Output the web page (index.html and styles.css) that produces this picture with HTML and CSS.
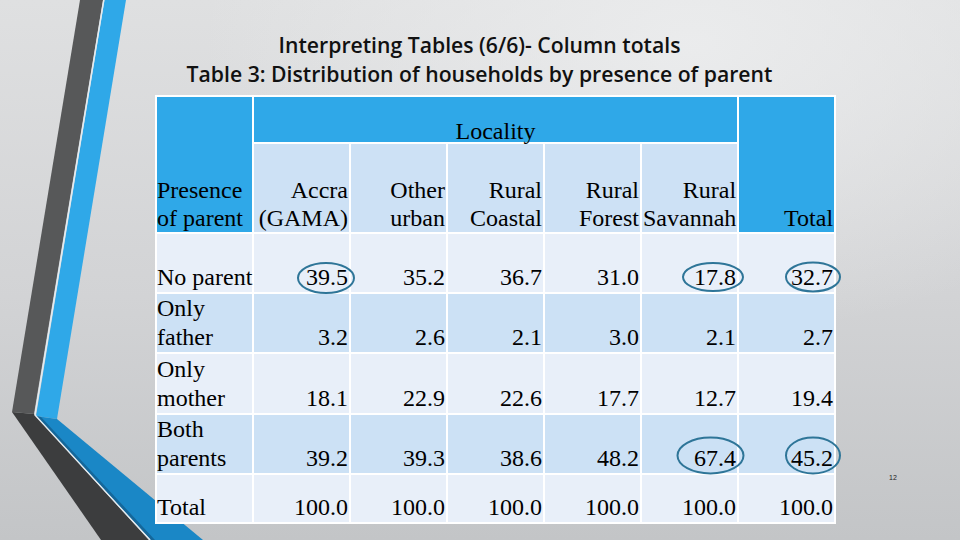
FILE: index.html
```html
<!DOCTYPE html>
<html lang="en">
<head>
<meta charset="utf-8">
<title>Interpreting Tables (6/6)- Column totals</title>
<link rel="stylesheet" href="styles.css">
</head>
<body>
<div class="slide">
  <svg class="deco" width="240" height="540" viewBox="0 0 240 540" aria-hidden="true">
    <polygon points="80,0 103,0 34,414 12,412" fill="#575859"/>
    <polygon points="12,412 34,414 149,540 101,540" fill="#3c3d3e"/>
    <polygon points="104.5,0 126,0 57,419 36,416" fill="#2fa8e8"/>
    <polygon points="36,416 57,419 203,540 151,540" fill="#1a87c6"/>
    <polygon points="36,416 41,417 155,540 151,540" fill="#14679a"/>
    <polyline points="103.8,0 35,415 150,540" fill="none" stroke="#e4ecf1" stroke-width="1.4"/>
  </svg>

  <header class="title">
    <div>Interpreting Tables (6/6)- Column totals</div>
    <div>Table 3: Distribution of households by presence of parent</div>
  </header>

  <div class="content">
    <table class="data">
      <colgroup>
        <col class="c"><col class="c"><col class="c"><col class="c"><col class="c"><col class="c"><col class="c">
      </colgroup>
      <tr class="h1">
        <td class="hd left" rowspan="2">Presence<br>of parent</td>
        <td class="hd center" colspan="5">Locality</td>
        <td class="hd num" rowspan="2">Total</td>
      </tr>
      <tr class="h2">
        <td class="sub num">Accra<br>(GAMA)</td>
        <td class="sub num">Other<br>urban</td>
        <td class="sub num">Rural<br>Coastal</td>
        <td class="sub num">Rural<br>Forest</td>
        <td class="sub num">Rural<br>Savannah</td>
      </tr>
      <tr class="r1 light">
        <td class="left">No parent</td>
        <td class="num">39.5</td><td class="num">35.2</td><td class="num">36.7</td><td class="num">31.0</td><td class="num">17.8</td><td class="num">32.7</td>
      </tr>
      <tr class="r2 mid">
        <td class="left">Only<br>father</td>
        <td class="num">3.2</td><td class="num">2.6</td><td class="num">2.1</td><td class="num">3.0</td><td class="num">2.1</td><td class="num">2.7</td>
      </tr>
      <tr class="r3 light">
        <td class="left">Only<br>mother</td>
        <td class="num">18.1</td><td class="num">22.9</td><td class="num">22.6</td><td class="num">17.7</td><td class="num">12.7</td><td class="num">19.4</td>
      </tr>
      <tr class="r4 mid">
        <td class="left">Both<br>parents</td>
        <td class="num">39.2</td><td class="num">39.3</td><td class="num">38.6</td><td class="num">48.2</td><td class="num">67.4</td><td class="num">45.2</td>
      </tr>
      <tr class="r5 light">
        <td class="left">Total</td>
        <td class="num">100.0</td><td class="num">100.0</td><td class="num">100.0</td><td class="num">100.0</td><td class="num">100.0</td><td class="num">100.0</td>
      </tr>
    </table>
    <div class="page-num">12</div>
  </div>

  <svg class="marks" width="960" height="540" viewBox="0 0 960 540" aria-hidden="true">
    <g fill="none" stroke="#2e7598" stroke-width="2">
      <ellipse cx="326" cy="278" rx="28" ry="15"/>
      <ellipse cx="713" cy="277" rx="30" ry="14"/>
      <ellipse cx="813" cy="277" rx="27" ry="14.5"/>
      <ellipse cx="710.5" cy="455.5" rx="33" ry="18"/>
      <ellipse cx="813" cy="455.5" rx="27" ry="18"/>
    </g>
  </svg>
</div>
</body>
</html>
```
FILE: styles.css
```css
html, body {
  margin: 0;
  padding: 0;
}

body {
  width: 960px;
  height: 540px;
  overflow: hidden;
}

.slide {
  position: relative;
  width: 960px;
  height: 540px;
  overflow: hidden;
  background:
    radial-gradient(ellipse 700px 420px at 72% 8%, rgba(236, 237, 238, 0.9), rgba(236, 237, 238, 0) 70%),
    linear-gradient(to bottom, #dfe0e1 0%, #d2d3d5 55%, #c3c5c7 100%);
  display: flex;
  flex-direction: column;
}

.deco {
  position: absolute;
  left: 0;
  top: 0;
}

.marks {
  position: absolute;
  left: 0;
  top: 0;
  pointer-events: none;
}

.title {
  position: relative;
  padding-top: 30px;
  text-align: center;
  font-family: "Open Sans", Lato, sans-serif;
  font-weight: 600;
  font-size: 21.2px;
  line-height: 29px;
  color: #111;
  margin-left: -1px;
}

.content {
  position: relative;
  display: flex;
  align-items: flex-start;
  margin-top: 7px;
  padding-left: 155px;
}

.data {
  border-collapse: separate;
  border-spacing: 2px;
  background: #ffffff;
  table-layout: fixed;
  width: 681px;
  font-family: "Liberation Serif", "Times New Roman", serif;
  font-size: 24px;
  line-height: 29px;
  color: #000;
}

.data col.c {
  width: 95px;
}

.data td {
  padding: 0 1px;
  vertical-align: bottom;
  white-space: nowrap;
}

.data .left {
  text-align: left;
  padding-left: 0;
}

.data .num {
  text-align: right;
}

.data .center {
  text-align: center;
}

.data .hd {
  background: #2fa8e8;
}

.data .sub {
  background: #cde1f5;
}

.data .h1 td {
  height: 45px;
  line-height: 22px;
}

.data .h2 td {
  height: 88px;
}

.data .hd[rowspan],
.data .h2 td {
  line-height: 28px;
}

.data .light td {
  background: #e8eff9;
}

.data .mid td {
  background: #cce1f5;
}

.data .r1 td { height: 58px; }
.data .r2 td { height: 57px; }
.data .r3 td { height: 59px; }
.data .r4 td { height: 58px; }
.data .r5 td { height: 47px; }

.page-num {
  margin-left: 53px;
  margin-top: 379px;
  font-family: "Liberation Sans", Arial, sans-serif;
  font-size: 7px;
  line-height: 8px;
  color: #222;
}
```
